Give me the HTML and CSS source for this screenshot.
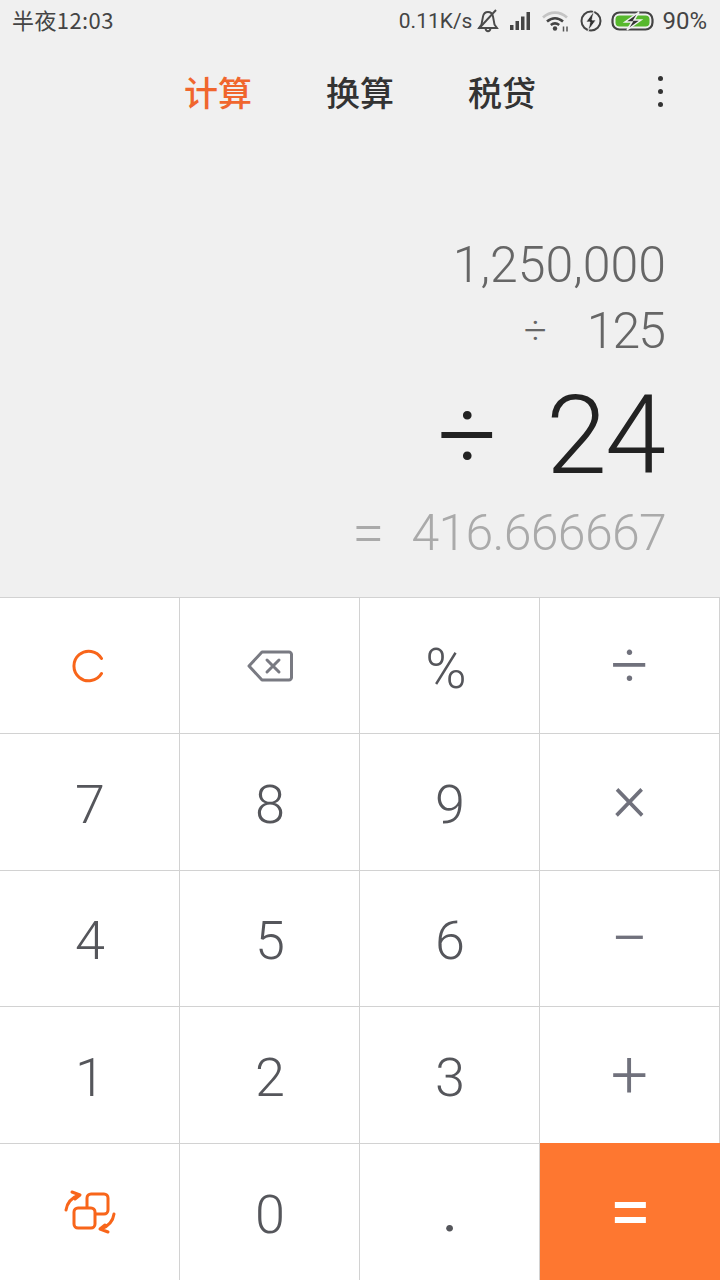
FILE: index.html
```html
<!DOCTYPE html>
<html>
<head>
  <meta charset="utf-8">
  <meta name="viewport" content="width=device-width">
  <title>计算器</title>
  <link rel="stylesheet" href="styles.css">
</head>
<body>
  <div id="app">
    <div class="status">
      <span class="time">半夜12:03</span>
      <div class="status-right">
        <span class="speed">0.11K/s</span>
        <svg class="ic-bell" width="22" height="24" viewBox="0 0 22 24" fill="none" stroke="#4a4a4a" stroke-width="1.900">
          <path d="M2 19h18l-2.500-3.500-1.500-8c-.6-3-3-4.500-5-4.500S6.600 4.500 6 7.500l-1.500 8z"/>
          <path d="M8.500 19.500c.3 1.800 1.300 2.700 2.500 2.700s2.200-.9 2.500-2.700"/>
          <path d="M2 19.500L19 1"/>
        </svg>
        <svg class="ic-signal" width="22" height="18" viewBox="0 0 22 18" fill="#444">
          <rect x="0" y="13" width="3.500" height="5"/>
          <rect x="5.500" y="9" width="3.500" height="9"/>
          <rect x="11" y="4.500" width="3.500" height="13.500"/>
          <rect x="16.500" y="0" width="3.500" height="18"/>
        </svg>
        <svg class="ic-wifi" width="28" height="22" viewBox="0 0 28 22" fill="none" stroke-width="2.600">
          <path d="M1 7.500C8 1 18 1 25 7.500" stroke="#c4c4c4"/>
          <path d="M5 11.500c5-4.300 11-4.300 16 0" stroke="#444"/>
          <path d="M8.800 15c3-2.300 5.400-2.300 8.400 0" stroke="#444"/>
          <circle cx="13" cy="18.500" r="2.200" fill="#444" stroke="none"/>
          <path d="M21.500 16.500v5M25 16.500v5" stroke="#555" stroke-width="1.500"/>
        </svg>
        <svg class="ic-bolt" width="22" height="22" viewBox="0 0 22 22" fill="none">
          <circle cx="11" cy="11" r="9.500" stroke="#444" stroke-width="2"/>
          <path d="M14 1L6 12h4l-2 9 8-11h-4z" fill="#333" stroke="#f0f0f0" stroke-width=".8"/>
        </svg>
        <svg class="ic-battery" width="44" height="20" viewBox="0 0 44 20" fill="none">
          <rect x="1.500" y="1.500" width="40" height="17" rx="7" stroke="#444" stroke-width="2.200"/>
          <rect x="4.500" y="4.500" width="34" height="11" rx="4" fill="#57b82d"/>
          <path d="M28 1L14 11h7l-5 8 14-10h-7z" fill="#333" stroke="#f0f0f0" stroke-width="1.500"/>
        </svg>
        <span class="batt-text">90%</span>
      </div>
    </div>

    <div class="tabs">
      <div class="tab-list">
        <span class="tab active">计算</span>
        <span class="tab">换算</span>
        <span class="tab">税贷</span>
      </div>
      <div class="menu"><i></i><i></i><i></i></div>
    </div>

    <div class="display">
      <div class="line prev">1,250,000</div>
      <div class="line prev prev-op"><span class="op">÷</span><span class="tight">125</span></div>
      <div class="line current"><span class="op">÷</span><span class="tight">24</span></div>
      <div class="line result"><span class="op">=</span><span class="tight">416.666667</span></div>
    </div>

    <div class="keypad">
      <div class="key key-c">
        <svg width="32" height="34" viewBox="0 0 32 34" fill="none" stroke="#f8651a" stroke-width="3" stroke-linecap="round">
          <path d="M29.500 9.500A14.800 14.800 0 1 0 29.500 24.500"/>
        </svg>
      </div>
      <div class="key">
        <svg width="46" height="32" viewBox="0 0 46 32" fill="none" stroke="#797a82" stroke-width="3" stroke-linejoin="round" stroke-linecap="round">
          <path d="M15 2h27a2.500 2.500 0 0 1 2.500 2.500v23a2.500 2.500 0 0 1-2.500 2.500H15L2 16z"/>
          <path d="M20 10l12 12M32 10L20 22"/>
        </svg>
      </div>
      <div class="key num pct">%</div>
      <div class="key opkey">÷</div>

      <div class="key num">7</div>
      <div class="key num">8</div>
      <div class="key num">9</div>
      <div class="key opkey op-times">×</div>

      <div class="key num">4</div>
      <div class="key num">5</div>
      <div class="key num">6</div>
      <div class="key opkey">−</div>

      <div class="key num">1</div>
      <div class="key num">2</div>
      <div class="key num">3</div>
      <div class="key opkey">+</div>

      <div class="key">
        <svg width="52" height="44" viewBox="0 0 52 44" fill="none" stroke="#f8651a" stroke-width="3" stroke-linecap="round" stroke-linejoin="round">
          <rect x="23" y="4" width="21" height="20" rx="4"/>
          <rect x="10" y="18" width="21" height="20" rx="4" fill="#fff"/>
          <path d="M2 20C3 13 7 8 15 5M8 2l8 3-5 4"/>
          <path d="M50 24c-1 7-5 12-13 15M44 42l-8-3 5-4"/>
        </svg>
      </div>
      <div class="key num">0</div>
      <div class="key num dot">.</div>
      <div class="key equals">=</div>
    </div>
  </div>
</body>
</html>
```

FILE: styles.css
```css
*{
  padding: 0;
  margin: 0;
  box-sizing: border-box;
}
body{
  background-color: #f0f0f0;
  font-family: Roboto, "Noto Sans CJK SC", sans-serif;
}
#app{
  display: flex;
  flex-direction: column;
  width: 720px;
  height: 1280px;
  overflow: hidden;
}

/* status bar */
.status{
  display: flex;
  justify-content: space-between;
  align-items: center;
  height: 41px;
  padding: 0 13px 0 12px;
  color: #444;
  font-size: 21px;
}
.time{
  font-family: "Noto Sans CJK SC", sans-serif;
  font-size: 22px;
  letter-spacing: .4px;
  margin-top: -3px;
}
.status-right{
  display: flex;
  align-items: center;
}
.speed{
  margin-right: 5px;
}
.ic-bell{
  margin-right: 11px;
}
.ic-signal{
  margin-right: 10px;
}
.ic-wifi{
  margin-right: 10px;
}
.ic-bolt{
  margin-right: 9px;
}
.ic-battery{
  margin-right: 7px;
}
.batt-text{
  font-size: 24px;
}

/* tabs */
.tabs{
  display: grid;
  grid-template-columns: 1fr auto 1fr;
  align-items: center;
  height: 101px;
}
.tab-list{
  grid-column: 2;
  display: flex;
  gap: 74px;
}
.tab{
  font-family: "Noto Sans CJK SC", sans-serif;
  font-size: 34px;
  font-weight: 500;
  line-height: 44px;
  color: #333;
}
.tab.active{
  color: #f0662d;
}
.menu{
  grid-column: 3;
  justify-self: end;
  display: flex;
  flex-direction: column;
  gap: 8px;
  margin-right: 57px;
}
.menu i{
  display: block;
  width: 5px;
  height: 5px;
  border-radius: 50%;
  background-color: #333;
}

/* display */
.display{
  flex: 1;
  display: flex;
  flex-direction: column;
  justify-content: flex-end;
  align-items: flex-end;
  padding: 0 54px 31px 0;
}
.line{
  display: flex;
  align-items: center;
  font-weight: 300;
  font-size: 50px;
  line-height: 66px;
}
.prev{
  color: #666;
}
.prev-op .tight{
  margin-right: 2px;
  letter-spacing: -2px;
}
.prev-op .op{
  margin-right: 40px;
  font-size: 40px;
}
.current{
  padding-top: 7px;
  font-size: 110px;
  line-height: 129px;
  color: #222;
}
.current .tight{
  margin-right: 2px;
  letter-spacing: -2px;
}
.current .op{
  margin-right: 49px;
  font-size: 104px;
  font-weight: 300;
}
.result{
  color: #aaa;
}
.result .tight{
  letter-spacing: -.7px;
}
.result .op{
  margin-right: 27px;
  font-size: 58px;
}

/* keypad */
.keypad{
  display: grid;
  grid-template-columns: repeat(4, 180px);
  grid-template-rows: 136px 137px 136px 137px 137px;
  height: 683px;
  background-color: #fff;
}
.key{
  display: flex;
  align-items: center;
  justify-content: center;
  border-top: 1px solid #d2d2d2;
  border-right: 1px solid #d2d2d2;
  background-color: #fff;
}
.key-c{
  padding-right: 3px;
}
.num{
  padding-top: 4px;
  padding-left: 1px;
  font-size: 54px;
  font-weight: 300;
  color: #55565b;
}
.pct{
  font-size: 56px;
  padding: 6px 7px 0 0;
}
.dot{
  font-weight: 400;
  font-size: 60px;
  padding: 0 0 4px 1px;
}
.opkey{
  font-size: 66px;
  font-weight: 300;
  color: #70717c;
}
.op-times{
  padding-bottom: 10px;
}
.equals{
  border: none;
  font-size: 76px;
  font-weight: 400;
  color: #fff;
  background-color: #fe7730;
}
```
